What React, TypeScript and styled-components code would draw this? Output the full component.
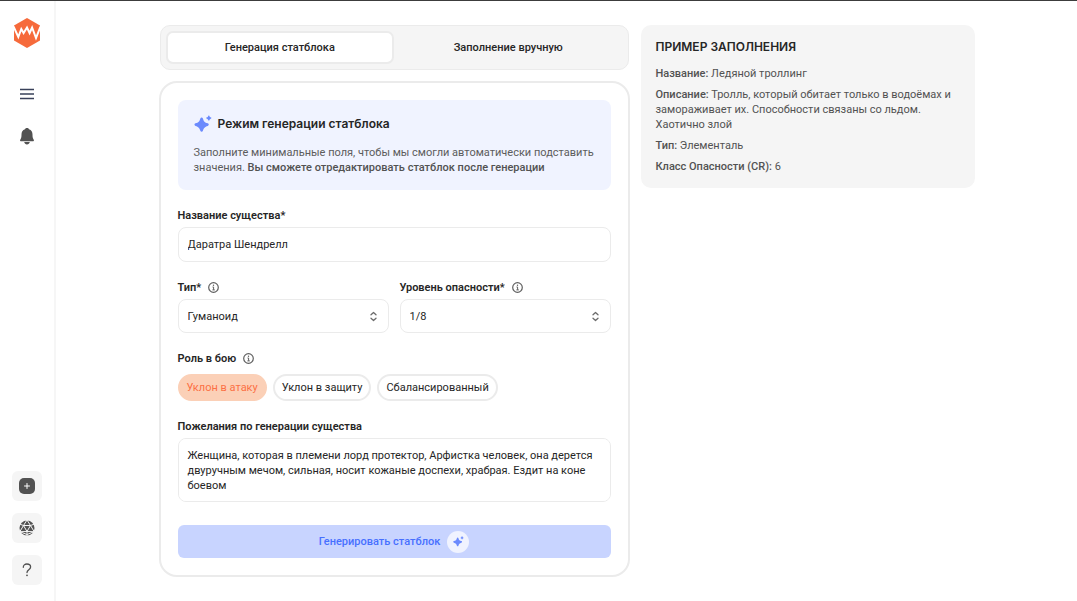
import React from "react";
import styled, { createGlobalStyle } from "styled-components";

const GlobalStyle = createGlobalStyle`
  *, *::before, *::after { box-sizing: border-box; }
  body {
    margin: 0;
    background: #fff;
    color: #262626;
    font-family: Roboto, "Liberation Sans", sans-serif;
    font-size: 11px;
    line-height: 15px;
    font-weight: 400;
  }
  button, input, select, textarea { font: inherit; color: inherit; margin: 0; }
  h2, p, fieldset { margin: 0; padding: 0; border: 0; }
`;

const Page = styled.div`
  display: flex;
  min-height: 100vh;
  border-top: 1px solid #3c3c3c;
`;

const Sidebar = styled.aside`
  display: flex;
  flex: none;
  flex-direction: column;
  justify-content: space-between;
  align-items: center;
  width: 56px;
  padding: 17px 0 16px;
  border-right: 2px solid #f6f6f6;
`;

const SideGroup = styled.nav`
  display: flex;
  flex-direction: column;
  align-items: center;
  gap: 12px;
`;

const LogoLink = styled.a`
  display: flex;
  margin-bottom: 19px;
`;

const IconButton = styled.button<{ $filled?: boolean }>`
  display: flex;
  align-items: center;
  justify-content: center;
  width: 30px;
  height: 30px;
  padding: 0;
  border: 0;
  border-radius: 6px;
  background: ${(p) => (p.$filled ? "#f5f5f5" : "transparent")};
  color: #525252;
  cursor: pointer;
`;

const Main = styled.main`
  flex: 1;
  padding: 24px 16px;
`;

const Columns = styled.div`
  display: grid;
  grid-template-columns: 471fr 334fr;
  align-items: start;
  gap: 11px;
  max-width: 816px;
  margin: 0 auto;
`;

const FormColumn = styled.div`
  display: flex;
  flex-direction: column;
  gap: 11px;
`;

const Tabs = styled.div`
  display: grid;
  grid-template-columns: 1fr 1fr;
  margin: 0 1px;
  padding: 5px;
  border: 1px solid #ebebeb;
  border-radius: 10px;
  background: #f5f5f5;
`;

const Tab = styled.button<{ $active?: boolean }>`
  height: 33px;
  padding: 0;
  border: 2px solid ${(p) => (p.$active ? "#ebebeb" : "transparent")};
  border-radius: 7px;
  background: ${(p) => (p.$active ? "#fff" : "transparent")};
  font-weight: 500;
  cursor: pointer;
`;

const Card = styled.form`
  display: flex;
  flex-direction: column;
  gap: 18px;
  padding: 17px;
  border: 2px solid #ebebeb;
  border-radius: 18px;
`;

const Notice = styled.section`
  padding: 15px 16px;
  border-radius: 8px;
  background: #f0f3ff;
  color: #5c5c5c;
`;

const Heading = styled.h2`
  display: flex;
  align-items: center;
  gap: 6px;
  margin-bottom: 12px;
  font-family: Inter, sans-serif;
  font-size: 12px;
  line-height: 15px;
  font-weight: 600;
  color: #262626;
`;

const NoticeHeading = styled(Heading)`
  line-height: 18px;
`;

const Strong = styled.strong`
  color: #525252;
  font-weight: 500;
`;

const Field = styled.div`
  display: flex;
  flex-direction: column;
  gap: 4px;
  min-width: 0;
`;

const FieldRow = styled.div`
  display: grid;
  grid-template-columns: 1fr 1fr;
  gap: 11px;
`;

const LabelRow = styled.div`
  display: flex;
  align-items: center;
  gap: 7px;
  font-weight: 600;
`;

const Control = styled.input`
  width: 100%;
  height: 35px;
  padding: 0 9px;
  border: 1px solid #ebebeb;
  border-radius: 8px;
  background: #fff;
  outline: none;
`;

const SelectWrap = styled.div`
  display: grid;
  align-items: center;

  > * { grid-area: 1 / 1; }
  > svg { justify-self: end; margin-right: 10px; pointer-events: none; }
`;

const Select = styled(Control).attrs({ as: "select" })`
  appearance: none;
  height: 34px;
`;

const TextArea = styled(Control).attrs({ as: "textarea" })`
  display: block;
  height: 64px;
  padding: 9px;
  resize: none;
`;

const RoleSet = styled.fieldset`
  display: flex;
  flex-direction: column;
  gap: 8px;
  min-width: 0;
`;

const Chips = styled.div`
  display: flex;
  flex-wrap: wrap;
  gap: 6px;
`;

const Chip = styled.button<{ $active?: boolean }>`
  height: 27px;
  padding: 0 7px;
  border: 2px solid ${(p) => (p.$active ? "#fbd0b7" : "#ebebeb")};
  border-radius: 14px;
  background: ${(p) => (p.$active ? "#fbd0b7" : "#fff")};
  color: ${(p) => (p.$active ? "#fb7045" : "#262626")};
  white-space: nowrap;
  cursor: pointer;
`;

const Submit = styled.button`
  display: flex;
  align-items: center;
  justify-content: center;
  gap: 7px;
  height: 33px;
  margin-top: 5px;
  border: 0;
  border-radius: 6px;
  background: #c8d4ff;
  color: #4770ff;
  font-weight: 500;
  cursor: pointer;
`;

const Badge = styled.span`
  display: flex;
  align-items: center;
  justify-content: center;
  width: 22px;
  height: 22px;
  border-radius: 50%;
  background: #f0f3ff;
`;

const Example = styled.aside`
  padding: 14px 15px;
  border-radius: 10px;
  background: #f5f5f5;
  color: #525252;
`;

const ExampleList = styled.div`
  display: flex;
  flex-direction: column;
  gap: 6px;
`;

const Logo = () => (
  <svg width="28" height="30" viewBox="0 0 28 30" aria-hidden="true">
    <path d="M14 0 27 7.500v15L14 30 1 22.500v-15z" fill="#f66a3b" />
    <path d="M.5 8.500 5.300 19 8.300 11l2.300 4L14 9.500l2.600 5.500 2.500-5.500 3.900 10.500L27.500 8.500" fill="none" stroke="#fff" strokeWidth="2" />
  </svg>
);

const MenuIcon = () => (
  <svg width="14" height="12" viewBox="0 0 14 12" aria-hidden="true">
    <path d="M0 1.500h14M0 6h14M0 10.500h14" stroke="#39415a" strokeWidth="1.300" />
  </svg>
);

const BellIcon = () => (
  <svg width="14" height="17" viewBox="0 0 14 17" fill="#525252" aria-hidden="true">
    <path d="M7 0c1 0 1.700.6 2 1.200C11.500 2 12.500 4 12.500 6.500c0 2.500.3 4 1.100 4.900.7.700.3 1.900-.7 1.900H1.100c-1 0-1.400-1.200-.7-1.900.8-.9 1.100-2.400 1.100-4.900C1.500 4 2.500 2 5 1.200 5.300.6 6 0 7 0zM4.200 14h5.600c-.3 1.500-1.400 2.400-2.800 2.400S4.500 15.500 4.200 14z" />
  </svg>
);

const PlusIcon = () => (
  <svg width="16" height="16" viewBox="0 0 16 16" aria-hidden="true">
    <rect width="16" height="16" rx="5" fill="#525252" />
    <path d="M8 5.500v5M5.500 8h5" stroke="#fff" strokeWidth="1" strokeLinecap="round" />
  </svg>
);

const DiceIcon = () => (
  <svg width="16" height="16" viewBox="0 0 16 16" aria-hidden="true">
    <circle cx="8" cy="8" r="7.500" fill="#525252" />
    <path d="M4.500 5.500h7L8 11.500zM8 0 4.500 5.500.5 4M8 0l3.500 5.500 4-1.500M4.500 5.500.8 11.700 8 11.500l7.200.2-3.700-6.200M8 11.500V16M.8 11.700 8 14.500l7.200-2.800" fill="none" stroke="#f5f5f5" strokeWidth="1" />
  </svg>
);

const QuestionIcon = () => (
  <svg width="10" height="14" viewBox="0 0 10 14" fill="none" aria-hidden="true">
    <path d="M1.300 4.300C1.300 2.200 2.800 1 4.900 1c2.200 0 3.700 1.200 3.700 3 0 2.700-3.600 2.800-3.600 5.500" stroke="#525252" strokeWidth="1.300" strokeLinecap="round" />
    <circle cx="5" cy="12.300" r=".9" fill="#525252" />
  </svg>
);

const SparkIcon = ({ size }: { size: number }) => (
  <svg width={size} height={size} viewBox="0 0 17 16" fill="#6b8afd" aria-hidden="true">
    <path d="M7.200 1.800c.6 0 1 .4 1.200 1 .9 2.900 1.700 3.700 4.600 4.600 1.300.4 1.300 2 0 2.400-2.900.9-3.700 1.700-4.600 4.600-.4 1.300-2 1.300-2.400 0-.9-2.900-1.700-3.700-4.600-4.600-1.300-.4-1.300-2 0-2.400C4.300 6.500 5.100 5.700 6 2.800c.2-.6.600-1 1.200-1z" />
    <path d="M14 0c.4 0 .6.200.7.600.2.700.4.900 1.100 1.100.8.200.8 1.200 0 1.400-.7.200-.9.400-1.100 1.100-.2.800-1.200.8-1.400 0-.2-.7-.4-.9-1.100-1.100-.8-.2-.8-1.200 0-1.400.7-.2.900-.4 1.100-1.100.1-.4.3-.6.700-.6z" />
  </svg>
);

const InfoIcon = () => (
  <svg width="11" height="11" viewBox="0 0 11 11" fill="none" stroke="#5f5f5f" aria-hidden="true">
    <circle cx="5.500" cy="5.500" r="4.800" strokeWidth="1.200" />
    <path d="M4.500 5h1.100v2.800M4.400 7.900h2.400" strokeWidth="1" />
    <circle cx="5.500" cy="3.200" r=".7" fill="#5f5f5f" stroke="none" />
  </svg>
);

const UpDownIcon = () => (
  <svg width="11" height="11" viewBox="0 0 11 11" fill="none" stroke="#6b6b6b" strokeWidth="1.300" strokeLinecap="round" strokeLinejoin="round" aria-hidden="true">
    <path d="M3 3.800 5.500 1.500 8 3.800M3 7.200l2.500 2.300L8 7.200" />
  </svg>
);

const modes = ["Генерация статблока", "Заполнение вручную"];
const roles = ["Уклон в атаку", "Уклон в защиту", "Сбалансированный"];

export default function App() {
  const [mode, setMode] = React.useState(0);
  const [role, setRole] = React.useState(0);

  return (
    <>
      <GlobalStyle />
      <Page>
        <Sidebar>
          <SideGroup>
            <LogoLink href="#" aria-label="Главная"><Logo /></LogoLink>
            <IconButton aria-label="Меню"><MenuIcon /></IconButton>
            <IconButton aria-label="Уведомления"><BellIcon /></IconButton>
          </SideGroup>
          <SideGroup>
            <IconButton $filled aria-label="Создать"><PlusIcon /></IconButton>
            <IconButton $filled aria-label="Кубики"><DiceIcon /></IconButton>
            <IconButton $filled aria-label="Помощь"><QuestionIcon /></IconButton>
          </SideGroup>
        </Sidebar>
        <Main>
          <Columns>
            <FormColumn>
              <Tabs role="tablist">
                {modes.map((label, i) => (
                  <Tab key={label} role="tab" aria-selected={mode === i} $active={mode === i} onClick={() => setMode(i)}>
                    {label}
                  </Tab>
                ))}
              </Tabs>
              <Card onSubmit={(e) => e.preventDefault()}>
                <Notice>
                  <NoticeHeading><SparkIcon size={18} />Режим генерации статблока</NoticeHeading>
                  <p>
                    Заполните минимальные поля, чтобы мы смогли автоматически подставить
                    значения. <Strong>Вы сможете отредактировать статблок после генерации</Strong>
                  </p>
                </Notice>
                <Field>
                  <LabelRow><label htmlFor="name">Название существа*</label></LabelRow>
                  <Control id="name" defaultValue="Даратра Шендрелл" />
                </Field>
                <FieldRow>
                  <Field>
                    <LabelRow><label htmlFor="type">Тип*</label><InfoIcon /></LabelRow>
                    <SelectWrap>
                      <Select id="type"><option>Гуманоид</option></Select>
                      <UpDownIcon />
                    </SelectWrap>
                  </Field>
                  <Field>
                    <LabelRow><label htmlFor="level">Уровень опасности*</label><InfoIcon /></LabelRow>
                    <SelectWrap>
                      <Select id="level"><option>1/8</option></Select>
                      <UpDownIcon />
                    </SelectWrap>
                  </Field>
                </FieldRow>
                <RoleSet aria-labelledby="role">
                  <LabelRow><span id="role">Роль в бою</span><InfoIcon /></LabelRow>
                  <Chips>
                    {roles.map((label, i) => (
                      <Chip key={label} type="button" aria-pressed={role === i} $active={role === i} onClick={() => setRole(i)}>
                        {label}
                      </Chip>
                    ))}
                  </Chips>
                </RoleSet>
                <Field>
                  <LabelRow><label htmlFor="wishes">Пожелания по генерации существа</label></LabelRow>
                  <TextArea
                    id="wishes"
                    defaultValue="Женщина, которая в племени лорд протектор, Арфистка человек, она дерется двуручным мечом, сильная, носит кожаные доспехи, храбрая. Ездит на коне боевом"
                  />
                </Field>
                <Submit type="submit">
                  Генерировать статблок
                  <Badge><SparkIcon size={11} /></Badge>
                </Submit>
              </Card>
            </FormColumn>
            <Example>
              <Heading>ПРИМЕР ЗАПОЛНЕНИЯ</Heading>
              <ExampleList>
                <p><Strong>Название:</Strong> Ледяной троллинг</p>
                <p><Strong>Описание:</Strong> Тролль, который обитает только в водоёмах и замораживает их. Способности связаны со льдом. Хаотично злой</p>
                <p><Strong>Тип:</Strong> Элементаль</p>
                <p><Strong>Класс Опасности (CR):</Strong> 6</p>
              </ExampleList>
            </Example>
          </Columns>
        </Main>
      </Page>
    </>
  );
}
